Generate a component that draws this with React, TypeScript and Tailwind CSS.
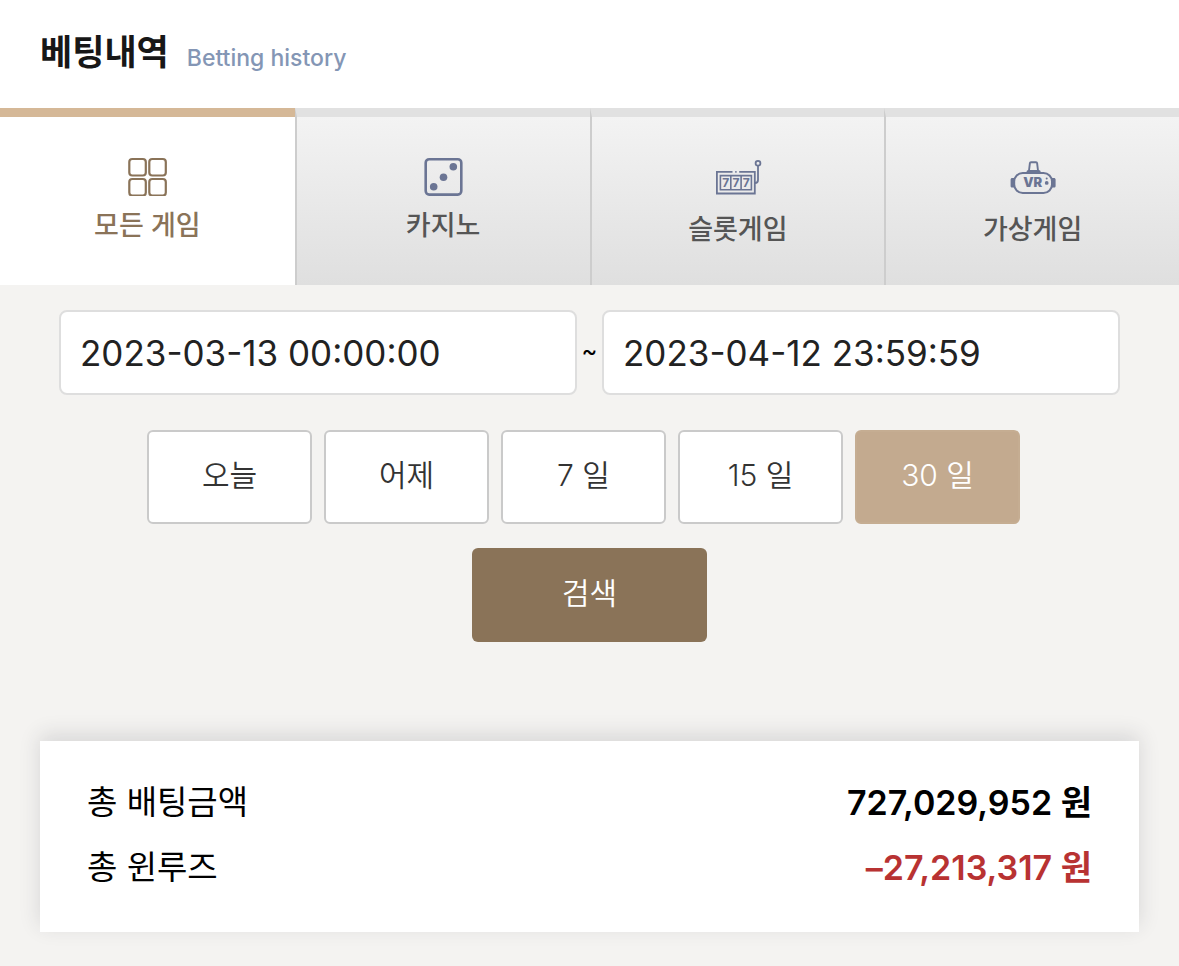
import { useState } from 'react'
import clsx from 'clsx'

function AllGamesIcon() {
  return (
    <svg className="w-10 h-10" viewBox="0 0 40 40" fill="none" stroke="currentColor" strokeWidth="2.2">
      <rect x="2.3" y="3" width="16.5" height="16.5" rx="3" />
      <rect x="22.3" y="3" width="16.5" height="16.5" rx="3" />
      <rect x="2.3" y="23" width="16.5" height="16.5" rx="3" />
      <rect x="22.3" y="23" width="16.5" height="16.5" rx="3" />
    </svg>
  )
}

function DiceIcon() {
  return (
    <svg className="w-10 h-10" viewBox="0 0 40 40" fill="none">
      <rect x="2.7" y="3.2" width="35.6" height="35.4" rx="3.5" stroke="currentColor" strokeWidth="2.6" />
      <g fill="currentColor">
        <circle cx="30.3" cy="10.8" r="3.8" />
        <circle cx="20.5" cy="21.3" r="3.8" />
        <circle cx="10.7" cy="30.8" r="3.8" />
      </g>
    </svg>
  )
}

function SlotIcon() {
  return (
    <svg className="w-12 h-11" viewBox="0 0 48 44" fill="none" stroke="currentColor" strokeWidth="1.8">
      <path d="M18.5 15.9H2.9v21.6h37.9V15.9H25.2" />
      <path d="M21.2 15.9h1.4" />
      <path d="M6.4 19.6h31v14.2h-31zM16.8 19.6v14.2M27.1 19.6v14.2" strokeWidth="1.6" />
      <circle cx="44" cy="7.2" r="2.4" />
      <path d="M44 9.6v14.4c0 1.8-1 3-3 3" />
      <g fill="currentColor" stroke="none" fontFamily="Inter, sans-serif" fontSize="12" fontWeight="700" textAnchor="middle">
        <text x="11.7" y="31">7</text>
        <text x="22" y="31">7</text>
        <text x="32.3" y="31">7</text>
      </g>
    </svg>
  )
}

function VrIcon() {
  return (
    <svg className="w-12 h-11" viewBox="0 0 48 44" fill="none" stroke="currentColor">
      <rect x="5.2" y="17" width="37.8" height="20" rx="8.5" strokeWidth="2" />
      <path d="M20 14.5l.9-7.3c.1-.7.5-1 1.1-1h5c.7 0 1 .3 1.1 1l.9 7.3" strokeWidth="1.9" />
      <path d="M17.6 17.4v-1.6c0-1 .8-1.8 1.8-1.8h10.4c1 0 1.8.8 1.8 1.8v1.6z" fill="currentColor" stroke="none" />
      <path d="M5.4 22H3.2c-.9 0-1.6.7-1.6 1.6v6.4c0 .9.7 1.6 1.6 1.6h2.2zM42.8 22H45c.9 0 1.6.7 1.6 1.6v6.4c0 .9-.7 1.6-1.6 1.6h-2.2z" fill="currentColor" stroke="none" />
      <circle cx="37.7" cy="26.9" r="1.9" fill="currentColor" stroke="none" />
      <circle cx="37.7" cy="22.4" r="1" fill="currentColor" stroke="none" />
      <text x="23.8" y="31" fill="currentColor" stroke="none" fontFamily="Inter, sans-serif" fontSize="13" fontWeight="900" textAnchor="middle">VR</text>
    </svg>
  )
}

const tabs = [
  { label: '모든 게임', icon: AllGamesIcon },
  { label: '카지노', icon: DiceIcon },
  { label: '슬롯게임', icon: SlotIcon },
  { label: '가상게임', icon: VrIcon },
]

const periods = ['오늘', '어제', '7 일', '15 일', '30 일']

const totals = [
  { label: '총 배팅금액', value: '727,029,952', negative: false },
  { label: '총 윈루즈', value: '–27,213,317', negative: true },
]

export default function App() {
  const [tab, setTab] = useState('모든 게임')
  const [period, setPeriod] = useState('30 일')
  const [from, setFrom] = useState('2023-03-13 00:00:00')
  const [to, setTo] = useState('2023-04-12 23:59:59')

  const inputClass =
    'flex-1 min-w-0 h-[85px] px-[19px] rounded-lg border-2 border-[#dedede] bg-white text-[35px] text-[#222] outline-none'

  return (
    <div className="min-h-screen bg-[#f4f3f1] text-black font-[Inter,'Noto_Sans_CJK_KR',sans-serif]">
      <header className="flex items-center gap-[18px] h-[108px] px-10 pb-1 bg-white">
        <h1 className="text-[35px] leading-[52px] font-bold text-[#171717]">베팅내역</h1>
        <span className="pt-3 text-[23px] font-medium text-[#8496b5]">Betting history</span>
      </header>

      <div role="tablist" className="grid grid-cols-4">
        {tabs.map(({ label, icon: Icon }, i) => (
          <button
            key={label}
            type="button"
            role="tab"
            aria-selected={tab === label}
            onClick={() => setTab(label)}
            className={clsx(
              'flex flex-col items-center gap-2.5 h-[177px] pt-[39px] border-t-[9px]',
              i > 0 && 'border-l-2 border-l-[#cdcdcd]',
              tab === label
                ? 'border-t-[#d5b897] bg-white text-[#8a7358]'
                : 'border-t-[#e1e1e1] bg-linear-to-b from-[#f3f3f3] to-[#dfdfdf] text-[#6b7594]'
            )}
          >
            <Icon />
            <span className={clsx('text-[27px] leading-10 font-medium', tab !== label && 'text-[#555]')}>{label}</span>
          </button>
        ))}
      </div>

      <form onSubmit={(e) => e.preventDefault()} className="pt-[25px]">
        <div className="flex items-center px-[59px]">
          <input type="text" aria-label="시작일" value={from} onChange={(e) => setFrom(e.target.value)} className={inputClass} />
          <span className="w-[25px] pb-1 text-center text-2xl">~</span>
          <input type="text" aria-label="종료일" value={to} onChange={(e) => setTo(e.target.value)} className={inputClass} />
        </div>

        <div className="flex flex-wrap justify-center gap-3 pt-[35px] pr-3">
          {periods.map((p) => (
            <button
              key={p}
              type="button"
              onClick={() => setPeriod(p)}
              className={clsx(
                'w-[165px] h-[94px] pb-1 rounded-md border-2 text-3xl font-[350]',
                period === p ? 'border-[#c5ad92] bg-[#c3aa8f] text-white' : 'border-[#cacaca] bg-white text-[#333]'
              )}
            >
              {p}
            </button>
          ))}
        </div>

        <div className="flex justify-center pt-6">
          <button type="submit" className="w-[235px] h-[94px] pb-1 rounded-md bg-[#8a7358] text-3xl font-[350] text-white">
            검색
          </button>
        </div>
      </form>

      <section className="mt-[99px] mx-10 px-[47px] pt-[29px] pb-8 bg-white shadow-[0_-6px_20px_rgba(40,45,60,0.14)]">
        <dl>
          {totals.map((t) => (
            <div key={t.label} className="flex justify-between text-[33px] leading-[65px]">
              <dt>{t.label}</dt>
              <dd className={clsx('text-[34px] font-semibold', t.negative && 'text-[#b83232]')}>{t.value} 원</dd>
            </div>
          ))}
        </dl>
      </section>
    </div>
  )
}
